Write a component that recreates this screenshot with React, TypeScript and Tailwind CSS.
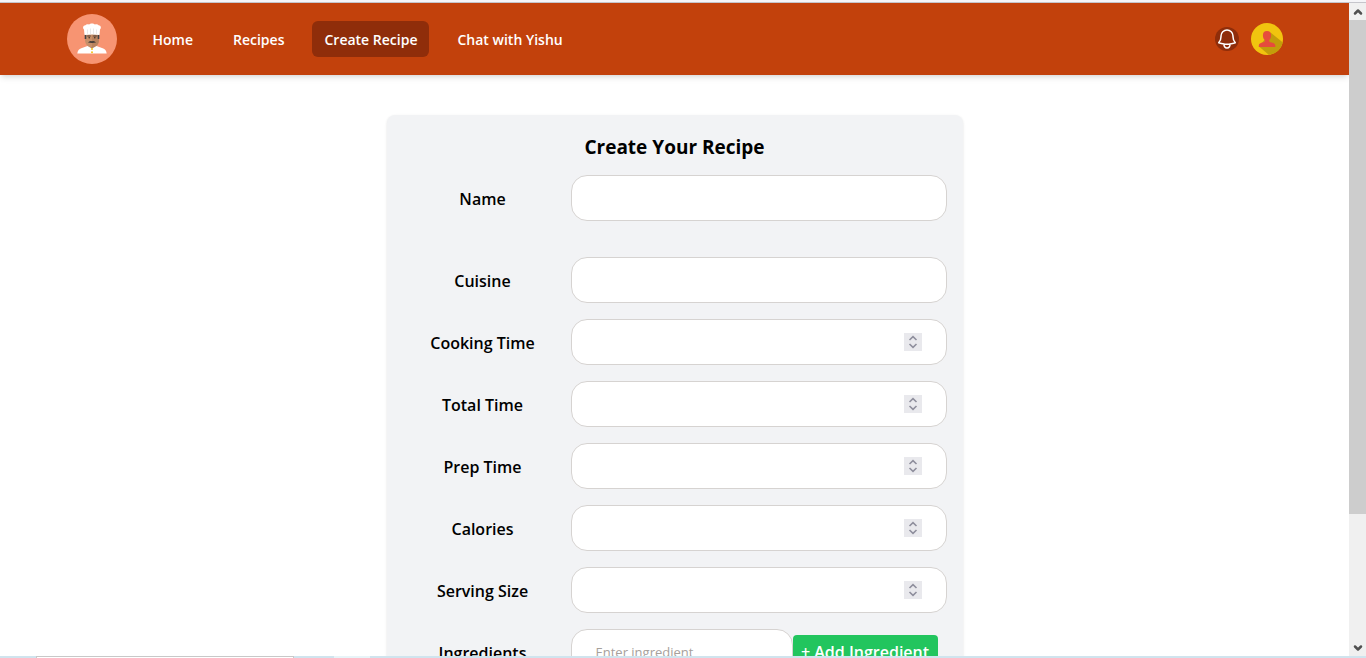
import React from "react";
import { ChevronDown, ChevronUp } from "lucide-react";

const links = [
  { label: "Home", active: false },
  { label: "Recipes", active: false },
  { label: "Create Recipe", active: true },
  { label: "Chat with Yishu", active: false },
];

function ChefLogo() {
  return (
    <svg viewBox="0 0 50 50" className="size-[50px] shrink-0" role="img" aria-label="Chef">
      <circle cx="25" cy="25" r="25" fill="#f79472" />
      <path d="M21 28h8v6l-4 2-4-2z" fill="#b07a57" />
      <path d="M18 20h14v6c0 4-3 7.500-7 7.500S18 30 18 26z" fill="#c68f69" />
      <path d="M25 20h7v6c0 4-3 7.500-7 7.500z" fill="#b9835e" />
      <path d="M17.700 20.500h1.600V25h-1.600zM30.700 20.500h1.600V25h-1.600z" fill="#3f4347" />
      <path d="M20.300 21.500h3.400v.9h-3.400zM26.300 21.500h3.400v.9h-3.400z" fill="#4a3b33" />
      <circle cx="22.200" cy="23.700" r=".8" fill="#3c2d28" />
      <circle cx="27.800" cy="23.700" r=".8" fill="#3c2d28" />
      <path d="M21 28.600q1.500-2.200 4-1.400 2.500-.8 4 1.400-4 .6-8 0z" fill="#3f3a38" />
      <path d="M17.500 21l-.5-5.500c-1.600-1.300-1.100-4 1.400-4.200.8-1.200 2.400-1.300 3.600-.7 1.300-1.500 4.700-1.500 6 0 1.200-.6 2.800-.5 3.600.7 2.500.2 3 2.900 1.400 4.200l-.5 5.500q-7.500-1.200-15 0z" fill="#fff" />
      <path d="M20.500 15.500v4.500M23.500 14.500v5.500M26.500 14.500v5.500M29.500 15.500v4.500" stroke="#dfe1e3" strokeWidth=".7" />
      <path d="M10.300 39.500c.4-3 1.700-4.500 4-5.200l6.200-2.300 4.500 2.500 4.500-2.500 6.200 2.300c2.300.7 3.600 2.200 4 5.200z" fill="#fff" />
      <circle cx="25" cy="35" r="1" fill="#f5c518" />
      <circle cx="25" cy="38.200" r="1" fill="#f5c518" />
    </svg>
  );
}

function Bell() {
  return (
    <svg viewBox="0 0 24 24" className="size-6" fill="none" stroke="#fff" strokeWidth="1.5" strokeLinecap="round" strokeLinejoin="round" aria-hidden="true">
      <path d="M14.857 17.082a23.848 23.848 0 0 0 5.454-1.310A8.967 8.967 0 0 1 18 9.750V9A6 6 0 0 0 6 9v.75a8.967 8.967 0 0 1-2.312 6.022c1.733.64 3.560 1.085 5.455 1.310m5.714 0a24.255 24.255 0 0 1-5.714 0m5.714 0a3 3 0 1 1-5.714 0" />
    </svg>
  );
}

function Avatar() {
  return (
    <svg viewBox="0 0 32 32" className="size-8" aria-hidden="true">
      <circle cx="16" cy="16" r="16" fill="#f1c40f" />
      <path d="M19.500 9.500l12.400 10A16 16 0 0 1 18 31.900L8 23.500z" fill="#c29d0b" />
      <path d="M16 8c2.700 0 4.100 1.500 4.100 4.200 0 2.300-.7 3.900-1.900 4.900v1.500c1.200 1.300 6.100 1 6.100 4V24H7.800v-1.400c0-3 4.900-2.700 6-4v-1.500c-1.200-1-1.900-2.600-1.900-4.900C11.900 9.500 13.300 8 16 8z" fill="#e64c3c" />
    </svg>
  );
}

function Field({ id, label, numeric }: { id: string; label: string; numeric?: boolean }) {
  return (
    <div className="flex items-center gap-2">
      <label htmlFor={id} className="w-40 shrink-0 pt-0.5 text-center font-semibold">{label}</label>
      <div className="flex h-[46px] min-w-0 flex-1 items-center rounded-2xl border border-stone-300 bg-white px-6">
        <input id={id} type={numeric ? "number" : "text"} className="min-w-0 flex-1 [appearance:textfield] bg-transparent outline-none" />
        {numeric && (
          <svg viewBox="0 0 18 18" className="size-[18px] bg-[#e9e9ed]" fill="none" stroke="#8f8f9d" strokeWidth="1.6" aria-hidden="true">
            <path d="M5.500 7L9 3.700 12.500 7M5.500 11L9 14.300 12.500 11" />
          </svg>
        )}
      </div>
    </div>
  );
}

export default function App() {
  return (
    <div className="flex h-screen flex-col overflow-hidden bg-white font-['Open_Sans','Noto_Sans',sans-serif] text-black">
      <div className="h-[3px] shrink-0 border-b border-[#c5c5cb] bg-[#f5f5f8]" />
      <div className="flex min-h-0 flex-1">
        <div className="min-w-0 flex-1 overflow-hidden">
          <header className="bg-[#c2410c] shadow-md">
            <div className="mx-auto flex h-[72px] max-w-7xl items-center justify-between px-8">
              <div className="flex items-center gap-6">
                <ChefLogo />
                <nav className="flex gap-4 text-sm font-semibold text-white">
                  {links.map((l) => (
                    <a key={l.label} href="#" className={l.active ? "rounded-md bg-[#8f2d0a] px-3 pt-[9px] pb-[7px]" : "rounded-md px-3 pt-[9px] pb-[7px]"}>{l.label}</a>
                  ))}
                </nav>
              </div>
              <div className="flex items-center gap-3">
                <button type="button" aria-label="Notifications" className="rounded-full bg-[#8f2d0a]"><Bell /></button>
                <button type="button" aria-label="Profile"><Avatar /></button>
              </div>
            </div>
          </header>
          <main className="px-4 pt-10">
            <form className="mx-auto flex max-w-xl flex-col gap-4 rounded-lg bg-[#f2f3f5] p-4 shadow-sm">
              <h1 className="pt-0.5 text-center text-[19px] leading-7 font-bold">Create Your Recipe</h1>
              <div className="-mt-0.5 pb-5"><Field id="name" label="Name" /></div>
              <Field id="cuisine" label="Cuisine" />
              <Field id="cooking" label="Cooking Time" numeric />
              <Field id="total" label="Total Time" numeric />
              <Field id="prep" label="Prep Time" numeric />
              <Field id="calories" label="Calories" numeric />
              <Field id="serving" label="Serving Size" numeric />
              <div className="flex items-center">
                <label htmlFor="ingredient" className="mr-2 w-40 shrink-0 pt-0.5 text-center font-semibold">Ingredients</label>
                <input id="ingredient" placeholder="Enter ingredient" className="h-[46px] w-[222px] min-w-0 rounded-2xl border border-stone-300 bg-white px-6 text-[13px] outline-none placeholder:text-stone-400" />
                <button type="button" className="h-[34px] w-[145px] rounded-sm bg-[#22c55e] text-base font-semibold whitespace-nowrap text-white">+ Add Ingredient</button>
              </div>
            </form>
          </main>
        </div>
        <div className="flex w-[17px] shrink-0 flex-col bg-[#f0f0f0] text-[#505050]" aria-hidden="true">
          <span className="flex h-[17px] items-center justify-center"><ChevronUp className="size-3" strokeWidth={5} /></span>
          <span className="flex-[494] bg-[#cdcdcd]" />
          <span className="flex-[125]" />
          <span className="flex h-[17px] items-center justify-center"><ChevronDown className="size-3" strokeWidth={5} /></span>
        </div>
      </div>
      <div className="flex h-0.5 shrink-0 bg-[#d0e4ee]">
        <div className="ml-9 w-[258px] border border-b-0 border-[#c8c8c8] bg-white" />
        <div className="ml-10 w-9 bg-[#e8f4f8]" />
      </div>
    </div>
  );
}
